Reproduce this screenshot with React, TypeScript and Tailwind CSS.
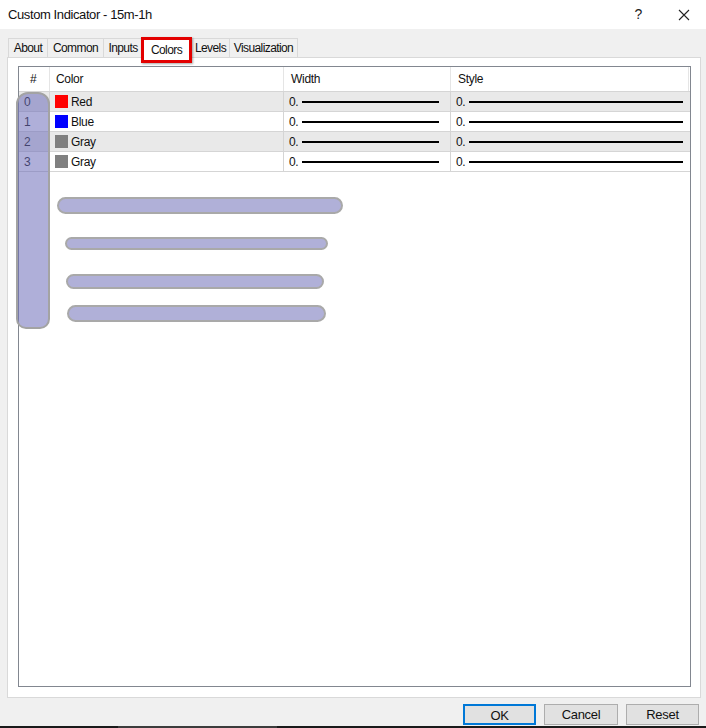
import { Fragment } from "react";

type Row = { idx: number; swatch: string; name: string };

const rows: Row[] = [
  { idx: 0, swatch: "bg-[#ff0000]", name: "Red" },
  { idx: 1, swatch: "bg-[#0000ff]", name: "Blue" },
  { idx: 2, swatch: "bg-[#808080]", name: "Gray" },
  { idx: 3, swatch: "bg-[#808080]", name: "Gray" },
];

const tabs = [
  { name: "About", w: "w-[39px]" },
  { name: "Common", w: "w-[56px]" },
  { name: "Inputs", w: "w-[39px]" },
  { name: "Colors", w: "w-[49px]", active: true },
  { name: "Levels", w: "w-[38px]" },
  { name: "Visualization", w: "w-[69px]" },
];

function CloseGlyph() {
  return (
    <svg width="12" height="12" viewBox="0 0 12 12" className="text-[#222]">
      <path d="M1 1 L11 11 M11 1 L1 11" stroke="currentColor" strokeWidth="1.1" />
    </svg>
  );
}

function StyleCell({ line }: { line: string }) {
  return (
    <div className="flex items-center pl-[5px] border-l border-[#d5d5d5] h-full">
      <span>0.</span>
      <span className={`ml-[4px] h-[2px] bg-black ${line}`} />
    </div>
  );
}

export default function App() {
  return (
    <div
      className="relative w-[706px] h-[728px] bg-[#f0f0f0] flex flex-col text-[12px] tracking-[-0.3px] text-[#111] overflow-hidden"
      style={{ fontFamily: '"Liberation Sans", Arial, sans-serif' }}
    >
      {/* title bar */}
      <div className="h-[29px] bg-white flex items-center pl-[8px] shrink-0">
        <span className="text-[13px] tracking-[-0.4px] text-[#111]">Custom Indicator - 15m-1h</span>
        <span className="ml-auto text-[14px] text-[#222] mr-[36px]">?</span>
        <span className="mr-[16px] flex items-center">
          <CloseGlyph />
        </span>
      </div>

      {/* tabs */}
      <div className="mt-[7px] h-[21px] flex items-end pl-[8px] shrink-0 tracking-[-0.6px]">
        {tabs.map((t) =>
          t.active ? (
            <div
              key={t.name}
              className={`relative h-[21px] ${t.w} bg-white border-x border-t border-[#d9d9d9] flex items-start justify-center pt-[3px] -mb-px z-10`}
            >
              <span>{t.name}</span>
              <span className="absolute -left-[2px] -right-[2px] -top-[1px] -bottom-[5px] border-[3px] border-[#e30000] shadow-[1px_1px_2px_rgba(0,0,0,0.35)]" />
            </div>
          ) : (
            <div
              key={t.name}
              className={`h-[19px] ${t.w} bg-[#f0f0f0] border-t border-l last:border-r border-[#d9d9d9] flex items-center justify-center`}
            >
              {t.name}
            </div>
          )
        )}
      </div>

      {/* tab panel */}
      <div className="ml-[7px] w-[694px] h-[641px] bg-white border border-[#d9d9d9] pl-[10px] pt-[8px] pr-[9px] pb-[10px] shrink-0">
        <div className="h-full border border-[#828790] bg-white">
          <div className="grid grid-cols-[30px_234px_167px_1fr] h-[25px] items-center border-b border-[#d5d5d5]">
            <div className="pl-[11px]">#</div>
            <div className="pl-[6px] border-l border-[#e5e5e5] h-full flex items-center">Color</div>
            <div className="pl-[7px] border-l border-[#e5e5e5] h-full flex items-center">Width</div>
            <div className="pl-[7px] border-l border-[#e5e5e5] h-full flex items-center border-r mr-[1px]">Style</div>
          </div>
          {rows.map((r) => (
            <div
              key={r.idx}
              className={`grid grid-cols-[30px_234px_167px_1fr] h-[20px] items-center border-b border-[#d5d5d5] ${
                r.idx % 2 === 0 ? "bg-[#e9e9e9]" : "bg-white"
              }`}
            >
              <div className="pl-[5px]">{r.idx}</div>
              <div className="flex items-center pl-[5px] border-l border-[#d5d5d5] h-full">
                <span className={`w-[13px] h-[13px] ${r.swatch}`} />
                <span className="ml-[3px]">{r.name}</span>
              </div>
              <StyleCell line="w-[137px]" />
              <Fragment>
                <StyleCell line="w-[214px]" />
              </Fragment>
            </div>
          ))}
        </div>
      </div>

      {/* buttons */}
      <div className="mt-[6px] h-[21px] flex justify-end gap-[8px] pr-[7px] shrink-0">
        <button className="w-[73px] h-[21px] bg-[#e1e1e1] border-2 border-[#0078d7] text-[13px]">OK</button>
        <button className="w-[74px] h-[21px] bg-[#e1e1e1] border border-[#adadad] text-[13px]">Cancel</button>
        <button className="w-[73px] h-[21px] bg-[#e1e1e1] border border-[#adadad] text-[13px]">Reset</button>
      </div>
      <div className="mt-auto h-[2px] flex shrink-0">
        <div className="w-[118px] bg-[#1a1a1a]" />
        <div className="w-[159px] bg-[#3c3c3c]" />
        <div className="flex-1 bg-[#1a1a1a]" />
      </div>

      {/* annotation highlights */}
      <div className="absolute left-[16px] top-[92px] w-[34px] h-[237px] rounded-t-[12px] rounded-b-[10px] border-2 border-[#a3a3a3] bg-[rgba(110,110,185,0.55)]" />
      <div className="absolute left-[57px] top-[197px] w-[286px] h-[17px] rounded-full border-2 border-[#a9a9a9] bg-[#b0b0d8]" />
      <div className="absolute left-[65px] top-[237px] w-[263px] h-[13px] rounded-full border-2 border-[#a9a9a9] bg-[#b0b0d8]" />
      <div className="absolute left-[66px] top-[274px] w-[258px] h-[15px] rounded-full border-2 border-[#a9a9a9] bg-[#b0b0d8]" />
      <div className="absolute left-[67px] top-[305px] w-[259px] h-[17px] rounded-full border-2 border-[#a9a9a9] bg-[#b0b0d8]" />
    </div>
  );
}
